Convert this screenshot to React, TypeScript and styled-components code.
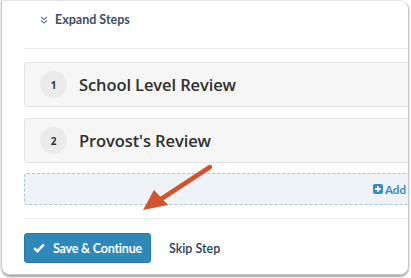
import styled, { createGlobalStyle } from 'styled-components';

const Global = createGlobalStyle`
  html, body { margin: 0; padding: 0; background: #fff; }
  body { width: 411px; height: 278px; overflow: hidden; font-family: Lato, "Open Sans", sans-serif; }
`;

const Card = styled.div`
  position: relative;
  box-sizing: border-box;
  width: 408px;
  height: 275px;
  margin-left: 1px;
  border: 1px solid #c9c9c9;
  border-top-color: #e6e6e6;
  border-radius: 0 9px 9px 9px;
  box-shadow: 0 2px 2px rgba(0, 0, 0, 0.35);
  overflow: hidden;
`;

const Inner = styled.div`
  padding-left: 22px;
  margin-right: -20px;
`;

const ExpandRow = styled.div`
  box-sizing: border-box;
  height: 47px;
  display: flex;
  align-items: flex-start;
  gap: 7px;
  padding: 11px 0 0 16px;
  line-height: 16px;
  font-size: 12.5px;
  font-weight: 700;
  color: #3d4d69;
`;

const Chevrons = styled.svg`
  margin-top: 4px;
`;

const Divider = styled.div`
  height: 1px;
  background: #ececec;
`;

const Steps = styled.div`
  display: flex;
  flex-direction: column;
  gap: 11px;
  padding-top: 13px;
`;

const StepCard = styled.div`
  height: 43px;
  display: flex;
  align-items: center;
  gap: 12px;
  padding-left: 15px;
  background: #f6f6f6;
  border: 1px solid #e2e2e2;
  border-radius: 3px;
`;

const Num = styled.div`
  width: 27px;
  height: 27px;
  border-radius: 50%;
  background: #ebebeb;
  display: flex;
  align-items: center;
  justify-content: center;
  font-family: "Open Sans", sans-serif;
  font-size: 10px;
  font-weight: 700;
  color: #333;
`;

const StepTitle = styled.div`
  font-family: "Open Sans", sans-serif;
  font-size: 16.5px;
  font-weight: 600;
  color: #2f2f2f;
  letter-spacing: -0.1px;
`;

const AddBox = styled.div`
  box-sizing: border-box;
  margin-top: 10px;
  height: 32px;
  display: flex;
  align-items: center;
  padding-left: 348px;
  background: #edf3f6;
  border: 1px dashed #a8c8dc;
  border-radius: 3px;
`;

const AddLink = styled.div`
  display: flex;
  align-items: center;
  gap: 2px;
  flex-shrink: 0;
  font-size: 11.5px;
  font-weight: 700;
  color: #3a8bc0;
  white-space: nowrap;
`;

const Footer = styled.div`
  margin-top: 13px;
  padding-top: 14px;
  border-top: 1px solid #ececec;
  display: flex;
  align-items: center;
  gap: 18px;
`;

const SaveButton = styled.button`
  height: 30px;
  width: 127px;
  display: flex;
  align-items: center;
  justify-content: center;
  gap: 8px;
  border: 1px solid #2878a6;
  border-radius: 3px;
  background: #2e88ba;
  color: #fff;
  font-family: Lato, sans-serif;
  font-size: 12.5px;
  font-weight: 700;
  letter-spacing: -0.2px;
  padding: 0;
`;

const SkipLink = styled.span`
  font-size: 12.5px;
  font-weight: 600;
  color: #2b3e57;
`;

const Arrow = styled.svg`
  position: absolute;
  left: 130px;
  top: 159px;
  pointer-events: none;
`;

export default function App() {
  return (
    <>
      <Global />
      <Card>
        <Inner>
          <ExpandRow>
            <Chevrons width="8" height="8" viewBox="0 0 8 8">
              <path d="M1 1 L4 3.5 L7 1 M1 4.5 L4 7 L7 4.5" fill="none" stroke="#6b7890" strokeWidth="1.1" />
            </Chevrons>
            Expand Steps
          </ExpandRow>
          <Divider />
          <Steps>
            <StepCard>
              <Num>1</Num>
              <StepTitle>School Level Review</StepTitle>
            </StepCard>
            <StepCard>
              <Num>2</Num>
              <StepTitle>Provost's Review</StepTitle>
            </StepCard>
          </Steps>
          <AddBox>
            <AddLink>
              <svg width="10" height="10" viewBox="0 0 10 10">
                <rect x="0" y="0" width="10" height="10" rx="2" fill="#3a8bc0" />
                <path d="M5 2.2 V7.8 M2.2 5 H7.8" stroke="#fff" strokeWidth="1.8" />
              </svg>
              Add New Step
            </AddLink>
          </AddBox>
          <Footer>
            <SaveButton>
              <svg width="12" height="10" viewBox="0 0 12 10">
                <path d="M1.2 5.2 L4.4 8.2 L10.8 1.6" fill="none" stroke="#fff" strokeWidth="2.4" />
              </svg>
              Save &amp; Continue
            </SaveButton>
            <SkipLink>Skip Step</SkipLink>
          </Footer>
        </Inner>
        <Arrow width="90" height="60" viewBox="0 0 90 60">
          <path d="M78 7 L26 41" stroke="#d3542a" strokeWidth="4.5" strokeLinecap="round" />
          <path d="M11 50 L22 30 L36 45 Z" fill="#d3542a" />
        </Arrow>
      </Card>
    </>
  );
}
